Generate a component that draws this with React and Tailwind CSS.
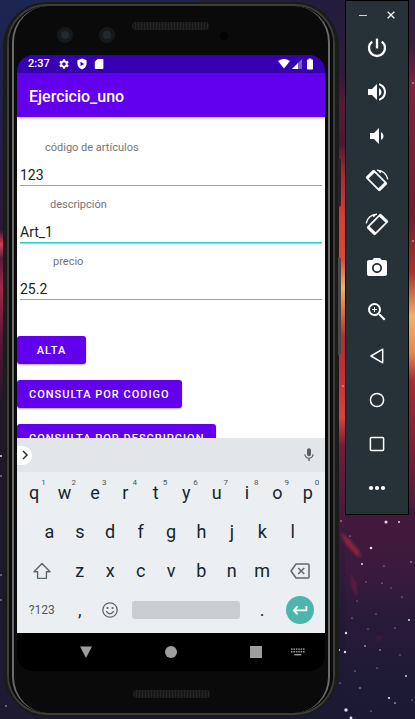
import React from "react";
import {
  MdVolumeUp,
  MdVolumeDown,
  MdPhotoCamera,
  MdZoomIn,
  MdMic,
  MdSettings,
} from "react-icons/md";

function Wallpaper() {
  const stars = [
    [341, 521, 0.7], [386, 522, 1.5], [399, 522, 1], [371, 548, 1.3], [362, 564, 1],
    [350, 536, 0.6], [382, 583, 0.6], [391, 588, 0.5], [409, 620, 1], [346, 633, 1.2],
    [345, 652, 1.2], [339, 650, 1], [365, 646, 0.8], [376, 614, 0.6], [395, 628, 0.6],
    [352, 618, 0.6], [380, 650, 0.7], [406, 676, 0.9], [389, 698, 1.1], [395, 703, 0.8],
    [346, 710, 1.7], [351, 718, 1.4], [360, 688, 0.7], [377, 668, 0.6], [371, 711, 0.6],
    [402, 597, 0.6], [357, 601, 0.5], [411, 562, 0.7], [384, 566, 0.6], [366, 582, 0.5],
    [355, 671, 0.6], [400, 655, 0.5], [412, 700, 0.6], [340, 683, 0.6], [368, 629, 0.5],
    [1, 456, 1], [1, 476, 0.7], [1, 575, 0.7], [1, 600, 0.7], [6, 706, 0.7], [413, 83, 0.8],
    [413, 241, 0.8], [343, 386, 0.7],
  ];
  return (
    <svg
      className="absolute inset-0 h-full w-full"
      viewBox="0 0 415 719"
      preserveAspectRatio="none"
      aria-hidden="true"
    >
      <defs>
        <linearGradient id="skyLeft" x1="0" y1="0" x2="0" y2="1">
          <stop offset="0" stopColor="#1c2650" />
          <stop offset="0.2" stopColor="#241f45" />
          <stop offset="0.32" stopColor="#2b1836" />
          <stop offset="0.34" stopColor="#d63a55" />
          <stop offset="0.36" stopColor="#5a1a3a" />
          <stop offset="0.4" stopColor="#a3264a" />
          <stop offset="0.47" stopColor="#5a1636" />
          <stop offset="0.56" stopColor="#201828" />
          <stop offset="1" stopColor="#1d1a33" />
        </linearGradient>
        <linearGradient id="skyGap" x1="0" y1="0" x2="0" y2="1">
          <stop offset="0" stopColor="#231d3c" />
          <stop offset="0.1" stopColor="#2e1b3a" />
          <stop offset="0.15" stopColor="#561c34" />
          <stop offset="0.2" stopColor="#4a1830" />
          <stop offset="0.24" stopColor="#a32a38" />
          <stop offset="0.3" stopColor="#d23f36" />
          <stop offset="0.36" stopColor="#dc4a34" />
          <stop offset="0.4" stopColor="#f0b468" />
          <stop offset="0.43" stopColor="#e0763f" />
          <stop offset="0.47" stopColor="#b02f35" />
          <stop offset="0.52" stopColor="#c03038" />
          <stop offset="0.58" stopColor="#d8443c" />
          <stop offset="0.62" stopColor="#741d38" />
          <stop offset="0.71" stopColor="#4a1a3b" />
          <stop offset="0.78" stopColor="#33193a" />
          <stop offset="0.88" stopColor="#1f1a35" />
          <stop offset="1" stopColor="#1a1a32" />
        </linearGradient>
        <linearGradient id="skyRight" x1="0" y1="0" x2="0" y2="1">
          <stop offset="0" stopColor="#2a2042" />
          <stop offset="0.06" stopColor="#3a1d40" />
          <stop offset="0.12" stopColor="#7b2440" />
          <stop offset="0.3" stopColor="#6d1f30" />
          <stop offset="0.38" stopColor="#a8352c" />
          <stop offset="0.44" stopColor="#f3b070" />
          <stop offset="0.49" stopColor="#e58a4e" />
          <stop offset="0.53" stopColor="#a62c33" />
          <stop offset="0.62" stopColor="#7a2036" />
          <stop offset="0.71" stopColor="#4a1c3c" />
          <stop offset="0.8" stopColor="#361a3b" />
          <stop offset="0.9" stopColor="#201a36" />
          <stop offset="1" stopColor="#1a1a32" />
        </linearGradient>
        <linearGradient id="skyLow" x1="0" y1="0" x2="0" y2="1">
          <stop offset="0" stopColor="#45193c" />
          <stop offset="0.3" stopColor="#3a1a3c" />
          <stop offset="0.55" stopColor="#271a38" />
          <stop offset="1" stopColor="#1a1a32" />
        </linearGradient>
        <filter id="soft">
          <feGaussianBlur stdDeviation="1.6" />
        </filter>
      </defs>
      <rect width="200" height="719" fill="url(#skyLeft)" />
      <rect x="200" width="178" height="719" fill="url(#skyGap)" />
      <rect x="378" width="37" height="719" fill="url(#skyRight)" />
      <rect x="345" y="508" width="70" height="211" fill="url(#skyLow)" />
      <g filter="url(#soft)">
        <path d="M340 532 L349 539 L359 551 L361 558 L355 554 L346 544 Z" fill="#8f2442" />
        <path d="M350 572 L357 584 L357 598 L352 588 Z" fill="#5a1e40" />
        <path d="M377 636 L384 637 L376 641 Z" fill="#4a1d40" />
      </g>
      {stars.map(([x, y, r]) => (
        <circle key={`${x}-${y}`} cx={x} cy={y} r={r} fill="#e6dcea" />
      ))}
    </svg>
  );
}

function RotateIcon({ className }) {
  return (
    <svg viewBox="0 0 24 24" className={className} fill="none" aria-hidden="true">
      <g transform="rotate(45 11.5 12.5)">
        <rect x="1.5" y="6.6" width="20" height="11.8" rx="1.4" fill="currentColor" />
        <rect x="4.6" y="8.3" width="13.8" height="8.4" fill="#263238" />
      </g>
      <path d="M12 2.1 A11 11 0 0 1 22.8 11.4" stroke="currentColor" strokeWidth="1.4" />
      <path d="M11.8 1.4 L16.4 3.6 L15.4 5.6 Z" fill="currentColor" />
    </svg>
  );
}

const tools = [
  {
    label: "Power",
    icon: (
      <svg viewBox="0 0 20 20" className="size-5" fill="none" stroke="currentColor" strokeWidth="2.3">
        <path d="M10 0.6 V10.4" />
        <path d="M5.2 3.6 A8 8 0 1 0 14.8 3.6" />
      </svg>
    ),
  },
  { label: "Volume up", icon: <MdVolumeUp className="size-6" /> },
  { label: "Volume down", icon: <MdVolumeDown className="size-6" /> },
  { label: "Rotate left", icon: <RotateIcon className="size-6" /> },
  { label: "Rotate right", icon: <RotateIcon className="size-6 -scale-x-100" /> },
  { label: "Take screenshot", icon: <MdPhotoCamera className="size-6" /> },
  { label: "Zoom", icon: <MdZoomIn className="size-6" /> },
  {
    label: "Back",
    icon: (
      <svg viewBox="0 0 16 16" className="size-4" fill="none" stroke="currentColor" strokeWidth="1.5" strokeLinejoin="round">
        <path d="M13.7 1.2 V14.8 L2 8 Z" />
      </svg>
    ),
  },
  {
    label: "Home",
    icon: (
      <svg viewBox="0 0 16 16" className="size-4" fill="none" stroke="currentColor" strokeWidth="1.5">
        <circle cx="8" cy="8" r="6.6" />
      </svg>
    ),
  },
  {
    label: "Overview",
    icon: (
      <svg viewBox="0 0 16 16" className="size-4" fill="none" stroke="currentColor" strokeWidth="1.5">
        <rect x="1.4" y="1.4" width="13.2" height="13.2" rx="1" />
      </svg>
    ),
  },
  {
    label: "More",
    icon: (
      <svg viewBox="0 0 18 6" className="h-1.5 w-[18px]" fill="currentColor">
        <circle cx="3" cy="3" r="2.1" />
        <circle cx="9" cy="3" r="2.1" />
        <circle cx="15" cy="3" r="2.1" />
      </svg>
    ),
  },
];

function Toolbar() {
  return (
    <aside className="relative mr-[6px] w-16 shrink-0 border border-black bg-[#263238] pb-1 text-white">
      <div className="flex h-[25px] items-center justify-center gap-4 pt-[3px]">
        <button aria-label="Minimize" className="flex size-3 items-center justify-center">
          <span className="h-px w-2 bg-gray-300" />
        </button>
        <button aria-label="Close" className="flex size-3 items-center justify-center">
          <svg viewBox="0 0 8 8" className="size-2" stroke="currentColor" strokeWidth="1.3">
            <path d="M0.7 0.7 L7.3 7.3 M7.3 0.7 L0.7 7.3" />
          </svg>
        </button>
      </div>
      {tools.map((t) => (
        <button key={t.label} aria-label={t.label} className="flex h-11 w-full items-center justify-center">
          {t.icon}
        </button>
      ))}
    </aside>
  );
}

function Speaker({ className }) {
  return (
    <div
      className={`h-2 w-[77px] rounded-sm bg-[#161616] bg-[repeating-linear-gradient(90deg,#262626_0_1px,#171717_1px_3px)] ${className}`}
    />
  );
}

function Lens() {
  return (
    <div className="mt-[21px] flex size-4 items-center justify-center rounded-full bg-[#15191b]">
      <div className="size-2 rounded-full bg-[#23292c]" />
    </div>
  );
}

function StatusBar() {
  return (
    <div className="flex h-[18px] shrink-0 items-center rounded-t-[16px] bg-[#3700b3] pr-3 pl-[11px] text-white">
      <span className="text-[11px] font-medium">2:37</span>
      <MdSettings className="ml-2 size-3" />
      <svg viewBox="0 0 12 12" className="ml-[6px] size-3" fill="currentColor" aria-hidden="true">
        <path fillRule="evenodd" d="M6 0.6 L10.6 2.2 V5.6 C10.6 8.5 8.7 10.6 6 11.6 C3.3 10.6 1.4 8.5 1.4 5.6 V2.2 Z M4.5 3.7 V8.1 L8.3 5.9 Z" />
      </svg>
      <svg viewBox="0 0 12 12" className="ml-[5px] size-3" fill="currentColor" aria-hidden="true">
        <path d="M4.6 1 H9.6 Q10.4 1 10.4 1.8 V10.2 Q10.4 11 9.6 11 H2.6 Q1.8 11 1.8 10.2 V3.8 Z" />
      </svg>
      <svg viewBox="0 0 12 10" className="ml-auto h-[10px] w-3" fill="currentColor" aria-hidden="true">
        <path d="M0 2 Q6 -1.8 12 2 L6 9.6 Z" />
      </svg>
      <svg viewBox="0 0 10 10" className="ml-0.5 size-[10px]" fill="currentColor" aria-hidden="true">
        <path d="M0 10 L10 0 V10 Z" opacity="0.35" />
        <path d="M0 10 L6 4 V10 Z" />
      </svg>
      <svg viewBox="0 0 6 12" className="ml-[5px] h-3 w-1.5" fill="currentColor" aria-hidden="true">
        <path d="M1.8 0.6 H4.2 V1.6 H5.4 Q6 1.6 6 2.2 V10.8 Q6 11.4 5.4 11.4 H0.6 Q0 11.4 0 10.8 V2.2 Q0 1.6 0.6 1.6 H1.8 Z" />
      </svg>
    </div>
  );
}

const plainLine = "border-[#a0a0a0]";
const activeLine = "border-[#22d3bd] shadow-[0_1px_0_#7fe6da]";

function Field({ id, label, value, indent, line }) {
  return (
    <div className="flex flex-col">
      <label htmlFor={id} className={`text-[11px] leading-4 text-[#757575] ${indent}`}>
        {label}
      </label>
      <input
        id={id}
        defaultValue={value}
        className={`mx-[3px] h-[30px] border-b bg-transparent pt-2 text-sm text-[#212121] outline-none ${line}`}
      />
    </div>
  );
}

function ActionButton({ children }) {
  return (
    <button className="h-7 min-w-[69px] rounded-[3px] bg-[#6200ee] px-3 pt-0.5 text-[11px] font-medium tracking-[1px] whitespace-nowrap text-white shadow-[0_1px_2px_rgba(0,0,0,0.35)]">
      {children}
    </button>
  );
}

function Form() {
  return (
    <main className="min-h-0 flex-1 basis-0 overflow-hidden bg-white pt-[23px]">
      <form className="flex flex-col gap-[11px]">
        <Field id="codigo" label="código de artículos" value="123" indent="pl-7" line={plainLine} />
        <Field id="descripcion" label="descripción" value="Art_1" indent="pl-[33px]" line={activeLine} />
        <Field id="precio" label="precio" value="25.2" indent="pl-9" line={plainLine} />
      </form>
      <div className="mt-9 flex flex-col items-start gap-4">
        <ActionButton>ALTA</ActionButton>
        <ActionButton>CONSULTA POR CODIGO</ActionButton>
        <ActionButton>CONSULTA POR DESCRIPCION</ActionButton>
      </div>
    </main>
  );
}

function Key({ children, hint }) {
  return (
    <button className="relative col-span-2 flex items-center justify-center text-lg text-[#14252d]">
      {children}
      {hint && (
        <span className="absolute top-[6px] left-[calc(50%+7px)] text-[8px] leading-none text-[#4a565c]">{hint}</span>
      )}
    </button>
  );
}

const rowClass = "grid h-[39px] grid-cols-[repeat(20,minmax(0,1fr))]";
const iconKey = "col-span-3 flex items-center justify-center text-[#5c686e]";

function Keyboard() {
  return (
    <section className="shrink-0 bg-[#eceff1]" aria-label="Keyboard">
      <div className="flex h-[34px] items-center justify-between bg-[#e2e6e9] pr-2">
        <button aria-label="Expand" className="flex h-[19px] w-[15px] items-center justify-center rounded-r-full bg-white">
          <svg viewBox="0 0 8 10" className="h-[10px] w-2" fill="none" stroke="#263238" strokeWidth="1.5">
            <path d="M2 1 L6 5 L2 9" />
          </svg>
        </button>
        <button aria-label="Voice input">
          <MdMic className="size-4 text-[#546067]" />
        </button>
      </div>
      <div className="px-0.5 pt-px pb-1">
        <div className={rowClass}>
          {"qwertyuiop".split("").map((c, i) => (
            <Key key={c} hint={String((i + 1) % 10)}>{c}</Key>
          ))}
        </div>
        <div className={rowClass}>
          <span />
          {"asdfghjkl".split("").map((c) => (
            <Key key={c}>{c}</Key>
          ))}
        </div>
        <div className={rowClass}>
          <button aria-label="Shift" className={iconKey}>
            <svg viewBox="0 0 20 18" className="h-[18px] w-5" fill="none" stroke="currentColor" strokeWidth="1.4" strokeLinejoin="round">
              <path d="M10 1.4 L18 9.8 H14.4 V16.4 H5.6 V9.8 H2 Z" />
            </svg>
          </button>
          {"zxcvbnm".split("").map((c) => (
            <Key key={c}>{c}</Key>
          ))}
          <button aria-label="Delete" className={iconKey}>
            <svg viewBox="0 0 20 16" className="h-4 w-5" fill="none" stroke="currentColor" strokeWidth="1.5" strokeLinejoin="round">
              <path d="M6 1 H18 Q19 1 19 2 V14 Q19 15 18 15 H6 L1 8 Z" />
              <path d="M8.2 5 L14.2 11 M14.2 5 L8.2 11" />
            </svg>
          </button>
        </div>
        <div className={rowClass}>
          <button className="col-span-3 text-xs text-[#4f5b61]">?123</button>
          <Key>,</Key>
          <button aria-label="Emoji" className="col-span-2 flex items-center justify-center text-[#5c686e]">
            <svg viewBox="0 0 16 16" className="size-4" fill="none" stroke="currentColor" strokeWidth="1.3">
              <circle cx="8" cy="8" r="7.2" />
              <path d="M4.2 9.2 Q8 14.4 11.8 9.2" />
              <circle cx="5.5" cy="6" r="1.1" fill="currentColor" stroke="none" />
              <circle cx="10.5" cy="6" r="1.1" fill="currentColor" stroke="none" />
            </svg>
          </button>
          <button aria-label="Space" className="col-span-8 flex items-center px-[7px]">
            <span className="h-[18px] w-full rounded-[3px] bg-[#c9cdcf]" />
          </button>
          <Key>.</Key>
          <button aria-label="Enter" className="col-span-3 flex items-center justify-center">
            <span className="flex size-7 items-center justify-center rounded-full bg-[#4db6ac]">
              <svg viewBox="0 0 16 12" className="h-3 w-4" fill="none" stroke="white" strokeWidth="1.8">
                <path d="M14.4 2 V6.4 H2 M5.6 2.4 L1.8 6.4 L5.6 10.4" />
              </svg>
            </span>
          </button>
        </div>
      </div>
    </section>
  );
}

function NavBar() {
  return (
    <nav className="flex h-[38px] shrink-0 items-center rounded-b-[16px] bg-black pr-5 pl-[63px] text-[#9e9e9e]">
      <div className="mr-[29px] flex flex-1 items-center justify-between">
        <button aria-label="Back">
          <svg viewBox="0 0 12 12" className="size-3" fill="currentColor">
            <path d="M0 0.4 H12 L6 12 Z" />
          </svg>
        </button>
        <button aria-label="Home" className="size-3 rounded-full bg-[#9e9e9e]" />
        <button aria-label="Recents" className="size-3 bg-[#9e9e9e]" />
      </div>
      <button aria-label="Switch keyboard">
        <svg viewBox="0 0 14 8" className="h-2 w-[14px]" fill="currentColor">
          {[0, 2.6].map((y) =>
            [0, 2.4, 4.8, 7.2, 9.6, 12].map((x) => <rect key={`${x}-${y}`} x={x} y={y + 0.4} width="1.5" height="1.5" />)
          )}
          <rect x="3.4" y="6" width="7" height="1.4" />
        </svg>
      </button>
    </nav>
  );
}

function Phone() {
  return (
    <div className="relative mt-0.5 mr-[6px] mb-0.5 ml-[3px] flex min-w-0 flex-1 rounded-[44px] border-x-4 border-y-2 border-[#1b1b1b] bg-[#1b1b1b]">
      <div className="absolute top-[154px] -right-[6px] h-[49px] w-[3px] rounded-r-sm bg-[#2a2224]" />
      <div className="absolute top-[253px] -right-[6px] h-[98px] w-[3px] rounded-r-sm bg-[#4a4748]" />
      <div className="flex min-w-0 flex-1 rounded-[40px] border-x-2 border-y-2 border-[#3d3d3d] bg-[#0a0a0a]">
        <div className="flex min-w-0 flex-1 rounded-[38px] border-x-3 border-[#0a0a0a]">
          <div className="flex min-w-0 flex-1 flex-col rounded-[36px] border-x-2 border-[#6b6b6b] bg-[#0a0a0a] px-[3px]">
            <div className="flex h-[49px] shrink-0 items-start pl-10">
              <Lens />
              <div className="w-[26px]" />
              <Lens />
              <Speaker className="mt-4 ml-[17px]" />
              <div className="mt-[26px] ml-[11px] size-2 rounded-full bg-[#020202]" />
            </div>
            <div className="flex min-h-0 flex-1 flex-col">
              <StatusBar />
              <header className="z-10 flex h-11 shrink-0 items-center bg-[#6200ee] px-3 shadow-[0_1px_3px_rgba(0,0,0,0.3)]">
                <h1 className="pt-1 text-base font-medium text-white">Ejercicio_uno</h1>
              </header>
              <Form />
              <Keyboard />
              <NavBar />
            </div>
            <div className="flex h-[42px] shrink-0 items-center justify-center pt-1">
              <Speaker className="" />
            </div>
          </div>
        </div>
      </div>
    </div>
  );
}

export default function App() {
  return (
    <div className="relative flex h-screen w-full overflow-hidden bg-[#1d1a33] font-[Roboto,sans-serif]">
      <Wallpaper />
      <Phone />
      <div className="flex items-start">
        <Toolbar />
      </div>
    </div>
  );
}
